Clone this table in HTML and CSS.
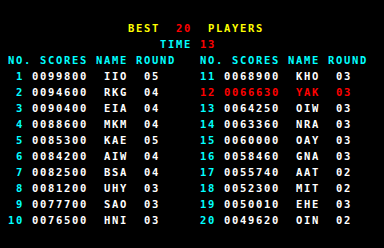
FILE: index.html
```html
<!DOCTYPE html>
<html>
<head>
<meta charset="utf-8">
<link rel="stylesheet" href="styles.css">
</head>
<body>
<div class="screen">
  <div class="title">
    <div class="line best"><span class="yellow">BEST</span>  <span class="red">20</span>  <span class="yellow">PLAYERS</span></div>
    <div class="line time"><span class="cyan">TIME</span> <span class="red">13</span></div>
  </div>
  <div class="tables">
    <div class="table">
      <div class="line head">NO. SCORES NAME ROUND</div>
      <div class="row"><span class="no"> 1</span><span class="score">0099800</span><span class="name">IIO</span><span class="round">05</span></div>
      <div class="row"><span class="no"> 2</span><span class="score">0094600</span><span class="name">RKG</span><span class="round">04</span></div>
      <div class="row"><span class="no"> 3</span><span class="score">0090400</span><span class="name">EIA</span><span class="round">04</span></div>
      <div class="row"><span class="no"> 4</span><span class="score">0088600</span><span class="name">MKM</span><span class="round">04</span></div>
      <div class="row"><span class="no"> 5</span><span class="score">0085300</span><span class="name">KAE</span><span class="round">05</span></div>
      <div class="row"><span class="no"> 6</span><span class="score">0084200</span><span class="name">AIW</span><span class="round">04</span></div>
      <div class="row"><span class="no"> 7</span><span class="score">0082500</span><span class="name">BSA</span><span class="round">04</span></div>
      <div class="row"><span class="no"> 8</span><span class="score">0081200</span><span class="name">UHY</span><span class="round">03</span></div>
      <div class="row"><span class="no"> 9</span><span class="score">0077700</span><span class="name">SAO</span><span class="round">03</span></div>
      <div class="row"><span class="no">10</span><span class="score">0076500</span><span class="name">HNI</span><span class="round">03</span></div>
    </div>
    <div class="table">
      <div class="line head">NO. SCORES NAME ROUND</div>
      <div class="row"><span class="no">11</span><span class="score">0068900</span><span class="name">KHO</span><span class="round">03</span></div>
      <div class="row current"><span class="no">12</span><span class="score">0066630</span><span class="name">YAK</span><span class="round">03</span></div>
      <div class="row"><span class="no">13</span><span class="score">0064250</span><span class="name">OIW</span><span class="round">03</span></div>
      <div class="row"><span class="no">14</span><span class="score">0063360</span><span class="name">NRA</span><span class="round">03</span></div>
      <div class="row"><span class="no">15</span><span class="score">0060000</span><span class="name">OAY</span><span class="round">03</span></div>
      <div class="row"><span class="no">16</span><span class="score">0058460</span><span class="name">GNA</span><span class="round">03</span></div>
      <div class="row"><span class="no">17</span><span class="score">0055740</span><span class="name">AAT</span><span class="round">02</span></div>
      <div class="row"><span class="no">18</span><span class="score">0052300</span><span class="name">MIT</span><span class="round">02</span></div>
      <div class="row"><span class="no">19</span><span class="score">0050010</span><span class="name">EHE</span><span class="round">03</span></div>
      <div class="row"><span class="no">20</span><span class="score">0049620</span><span class="name">OIN</span><span class="round">02</span></div>
    </div>
  </div>
</div>
</body>
</html>
```
FILE: styles.css
```css
html, body {
  margin: 0;
  padding: 0;
  background: #000;
}
.screen {
  width: 384px;
  height: 248px;
  box-sizing: border-box;
  padding-top: 20px;
  background: #000;
  font-family: "DejaVu Sans Mono", "Liberation Mono", monospace;
  font-weight: bold;
  font-size: 10.5px;
  letter-spacing: 1.68px;
  line-height: 16px;
  color: #fff;
  overflow: hidden;
}
.line, .row {
  height: 16px;
  white-space: pre;
}
.best { padding-left: 128px; }
.time { padding-left: 160px; }
.yellow { color: #ffff00; }
.red { color: #ff0000; }
.cyan { color: #00ffff; }
.tables {
  display: flex;
}
.table {
  width: 192px;
  padding-left: 8px;
  box-sizing: border-box;
}
.head { color: #00ffff; }
.row {
  display: flex;
}
.no { width: 24px; color: #00ffff; }
.score { width: 72px; }
.name { width: 40px; }
.round { width: 16px; }
.current, .current .no { color: #ff0000; }
```
